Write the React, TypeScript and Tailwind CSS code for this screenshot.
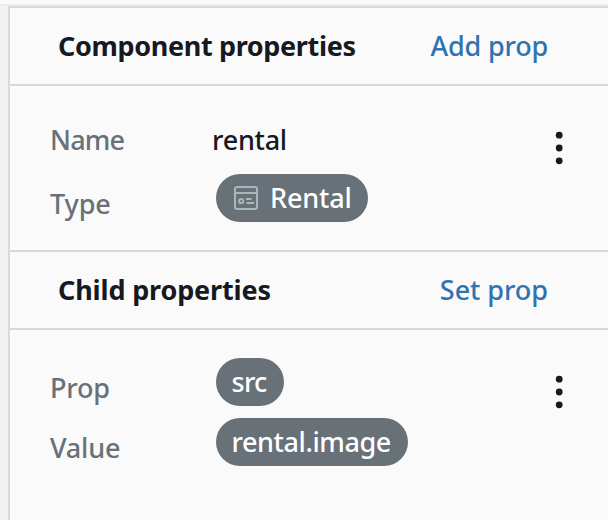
import React from "react";

interface SectionHeaderProps {
  title: string;
  action: string;
  titleClass: string;
  actionClass: string;
}

const SectionHeader: React.FC<SectionHeaderProps> = ({ title, action, titleClass, actionClass }) => (
  <div className="flex h-[78px] items-center justify-between border-b-2 border-[#d8dada] pr-[60px] pl-12">
    <h2 className={`text-[27px] font-bold text-[#16191f] ${titleClass}`}>{title}</h2>
    <button className={`text-[27px] font-medium text-[#3173b1] ${actionClass}`}>{action}</button>
  </div>
);

const MenuButton: React.FC = () => (
  <button aria-label="Actions" className="block">
    <svg width="8" height="34" viewBox="0 0 8 34" fill="#16191f">
      <circle cx="4.2" cy="4.2" r="3.4" />
      <circle cx="4.2" cy="17" r="3.4" />
      <circle cx="4.2" cy="29.8" r="3.4" />
    </svg>
  </button>
);

interface BadgeProps {
  className?: string;
  children: React.ReactNode;
}

const Badge: React.FC<BadgeProps> = ({ className = "", children }) => (
  <span
    className={`inline-flex h-12 items-center rounded-full bg-[#687078] pl-[15.5px] text-[27px] font-medium whitespace-nowrap text-white ${className}`}
  >
    {children}
  </span>
);

const ModelIcon: React.FC = () => (
  <svg width="24" height="24" viewBox="0 0 24 24" fill="none" stroke="#aab7b8" strokeWidth="2">
    <rect x="1" y="1" width="22" height="22" rx="2" />
    <path d="M1 7h22M12 13h5.5M12.5 17h7.5" />
    <circle cx="7.2" cy="15" r="2.1" />
  </svg>
);

export default function App() {
  return (
    <div className="flex h-[520px] w-[608px] flex-col overflow-hidden bg-[#f2f2f2] font-['Noto_Sans',sans-serif]">
      <div className="h-[6px] shrink-0 border-b-2 border-[#ebeeed] bg-[#fafafa]" />
      <div className="ml-2 flex-1 border-t-2 border-l-2 border-[#d6dada] bg-[#fafafa]">
        <SectionHeader
          title="Component properties"
          action="Add prop"
          titleClass="tracking-[-0.35px]"
          actionClass="tracking-[-0.2px]"
        />
        <div className="flex h-[166px] border-b-2 border-[#d8dada] pl-10">
          <div className="w-[162px] pt-9 text-[27px] leading-[36px] font-medium tracking-[-0.8px] text-[#687078]">
            <div>Name</div>
            <div className="mt-7 tracking-[-0.1px]">Type</div>
          </div>
          <div className="flex-1 pt-9">
            <div className="text-[27px] leading-[36px] font-medium tracking-[-0.25px] text-[#16191f]">rental</div>
            <div className="mt-4 ml-1 flex">
              <Badge className="w-[152px] pl-[18px] tracking-[-0.15px]">
                <ModelIcon />
                <span className="ml-3">Rental</span>
              </Badge>
            </div>
          </div>
          <div className="w-[53px] pt-[45px]"><MenuButton /></div>
        </div>
        <SectionHeader
          title="Child properties"
          action="Set prop"
          titleClass="tracking-[-0.15px]"
          actionClass="tracking-[-0.05px]"
        />
        <div className="flex pl-10">
          <div className="w-[166px] pt-10 text-[27px] leading-[36px] font-medium tracking-[-0.2px] text-[#687078]">
            <div>Prop</div>
            <div className="mt-6">Value</div>
          </div>
          <div className="flex flex-1 flex-col items-start gap-3 pt-7">
            <Badge className="w-[68px] tracking-[-0.7px]">src</Badge>
            <Badge className="w-[192px] tracking-[-0.4px]">rental.image</Badge>
          </div>
          <div className="w-[53px] pt-[45px]"><MenuButton /></div>
        </div>
      </div>
    </div>
  );
}
